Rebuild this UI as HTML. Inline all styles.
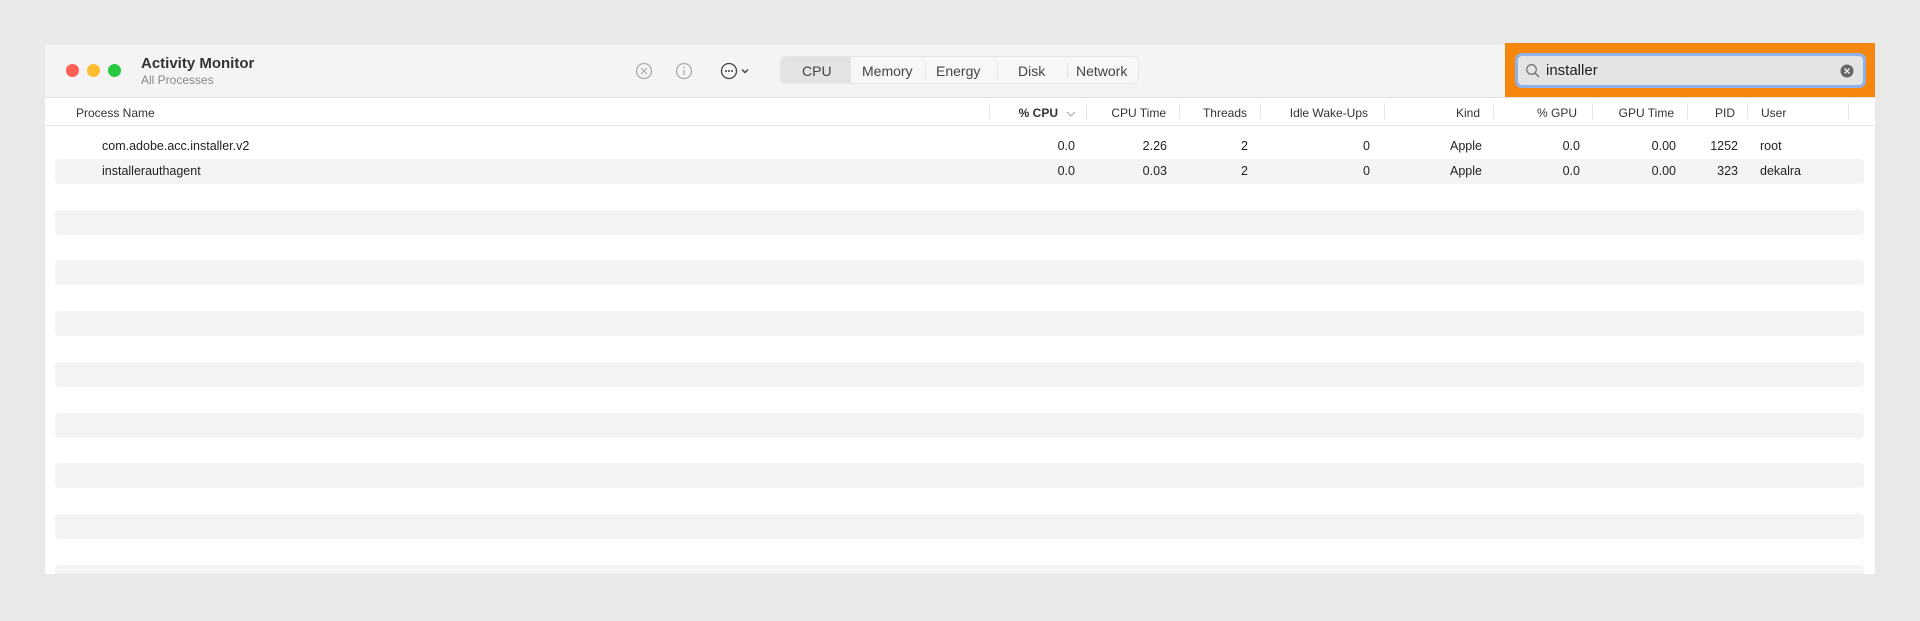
<!DOCTYPE html>
<html><head><meta charset="utf-8"><style>
*{margin:0;padding:0;box-sizing:border-box}
body{width:1920px;height:621px;background:#e9e9e9;font-family:"Liberation Sans",sans-serif;position:relative;overflow:hidden;color:#222}
.win{position:absolute;left:45px;top:45px;width:1830px;height:529px;background:#fff;overflow:hidden}
.tb{position:absolute;left:0;top:0;width:100%;height:53px;background:#f4f4f4;border-bottom:1px solid #e0e0e0}
.a{position:absolute;white-space:nowrap}
.dot{position:absolute;width:13px;height:13px;border-radius:50%;top:19px}
.seg{position:absolute;left:735px;top:11px;width:359px;height:28px;border:1px solid #e6e6e6;border-radius:6px;background:#f7f7f7}
.seg span{position:absolute;top:6px;font-size:14px;color:#444}
.hd{position:absolute;top:61px;font-size:12px;color:#333}
.r{text-align:right}
.sep{position:absolute;top:58px;width:1px;height:16px;background:#e4e4e4}
.cell{position:absolute;font-size:12.5px;color:#222}
.stripe{position:absolute;left:10px;width:1809px;height:25px;background:#f4f4f4;border-radius:4px}
</style></head><body>
<div class="win">
<div class="tb">
<div class="dot" style="left:21px;background:#fe5f57"></div>
<div class="dot" style="left:42px;background:#febc2e"></div>
<div class="dot" style="left:63px;background:#28c840"></div>
<div class="a" style="left:96px;top:10px;font-size:15px;font-weight:bold;color:#333">Activity Monitor</div>
<div class="a" style="left:96px;top:28px;font-size:12px;color:#888">All Processes</div>
<svg class="a" style="left:590px;top:17px" width="18" height="18"><circle cx="9" cy="9" r="7.5" fill="none" stroke="#aaa" stroke-width="1.2"/><path d="M6 6L12 12M12 6L6 12" stroke="#aaa" stroke-width="1.2"/></svg>
<svg class="a" style="left:630px;top:17px" width="18" height="18"><circle cx="9" cy="9" r="7.5" fill="none" stroke="#aaa" stroke-width="1.2"/><path d="M9 8V13" stroke="#aaa" stroke-width="1.3"/><circle cx="9" cy="5.5" r="0.9" fill="#aaa"/></svg>
<svg class="a" style="left:675px;top:17px" width="32" height="18"><circle cx="9" cy="9" r="7.5" fill="none" stroke="#444" stroke-width="1.3"/><circle cx="6" cy="9" r="1" fill="#444"/><circle cx="9" cy="9" r="1" fill="#444"/><circle cx="12" cy="9" r="1" fill="#444"/><path d="M22 7.5L25 10.5L28 7.5" fill="none" stroke="#444" stroke-width="1.4"/></svg>
<div class="seg">
<div style="position:absolute;left:0;top:0;width:70px;height:26px;background:#e3e3e3;border-radius:5px 0 0 5px"></div>
<span style="left:21px">CPU</span><span style="left:81px">Memory</span><span style="left:155px">Energy</span><span style="left:237px">Disk</span><span style="left:295px">Network</span>
<div style="position:absolute;left:144px;top:5px;width:1px;height:16px;background:#e4e4e4"></div>
<div style="position:absolute;left:216px;top:5px;width:1px;height:16px;background:#e4e4e4"></div>
<div style="position:absolute;left:286px;top:5px;width:1px;height:16px;background:#e4e4e4"></div>
</div>
</div>
<div style="position:absolute;left:0;top:80px;width:100%;height:1px;background:#e4e4e4"></div>
<div class="hd" style="left:31px">Process Name</div>
<div class="sep" style="left:944px"></div><div class="sep" style="left:1041px"></div><div class="sep" style="left:1134px"></div><div class="sep" style="left:1215px"></div><div class="sep" style="left:1339px"></div><div class="sep" style="left:1448px"></div><div class="sep" style="left:1547px"></div><div class="sep" style="left:1642px"></div><div class="sep" style="left:1702px"></div><div class="sep" style="left:1803px"></div>
<div class="hd r" style="right:817px;font-weight:bold">% CPU</div>
<svg class="a" style="left:1021px;top:65px" width="10" height="8"><path d="M1 2L5 6L9 2" fill="none" stroke="#aaa" stroke-width="1.1"/></svg>
<div class="hd r" style="right:709px">CPU Time</div>
<div class="hd r" style="right:628px">Threads</div>
<div class="hd r" style="right:507px">Idle Wake-Ups</div>
<div class="hd r" style="right:395px">Kind</div>
<div class="hd r" style="right:298px">% GPU</div>
<div class="hd r" style="right:201px">GPU Time</div>
<div class="hd r" style="right:140px">PID</div>
<div class="hd" style="left:1716px">User</div>
<div class="stripe" style="top:114px"></div>
<div class="stripe" style="top:165px"></div><div class="stripe" style="top:215px"></div><div class="stripe" style="top:266px"></div><div class="stripe" style="top:317px"></div><div class="stripe" style="top:368px"></div><div class="stripe" style="top:418px"></div><div class="stripe" style="top:469px"></div><div class="stripe" style="top:520px"></div>
<div class="cell" style="left:57px;top:94px">com.adobe.acc.installer.v2</div>
<div class="cell r" style="right:800px;top:94px">0.0</div><div class="cell r" style="right:708px;top:94px">2.26</div><div class="cell r" style="right:627px;top:94px">2</div><div class="cell r" style="right:505px;top:94px">0</div><div class="cell r" style="right:393px;top:94px">Apple</div><div class="cell r" style="right:295px;top:94px">0.0</div><div class="cell r" style="right:199px;top:94px">0.00</div><div class="cell r" style="right:137px;top:94px">1252</div><div class="cell" style="left:1715px;top:94px">root</div>
<div class="cell" style="left:57px;top:119px">installerauthagent</div>
<div class="cell r" style="right:800px;top:119px">0.0</div><div class="cell r" style="right:708px;top:119px">0.03</div><div class="cell r" style="right:627px;top:119px">2</div><div class="cell r" style="right:505px;top:119px">0</div><div class="cell r" style="right:393px;top:119px">Apple</div><div class="cell r" style="right:295px;top:119px">0.0</div><div class="cell r" style="right:199px;top:119px">0.00</div><div class="cell r" style="right:137px;top:119px">323</div><div class="cell" style="left:1715px;top:119px">dekalra</div>
</div>
<div class="a" style="left:1505px;top:43px;width:370px;height:54px;background:#f5870f"></div>
<div class="a" style="left:1515px;top:53px;width:351px;height:35px;background:#e4e4e4;border:3px solid #8fb2ea;border-radius:7px"></div>
<svg class="a" style="left:1525px;top:63px" width="16" height="16"><circle cx="6.5" cy="6.5" r="4.8" fill="none" stroke="#777" stroke-width="1.3"/><path d="M10 10L14 14" stroke="#777" stroke-width="1.5"/></svg>
<div class="a" style="left:1546px;top:62px;font-size:15px;color:#222">installer</div>
<svg class="a" style="left:1840px;top:64px" width="14" height="14"><circle cx="7" cy="7" r="6.5" fill="#666"/><path d="M4.5 4.5L9.5 9.5M9.5 4.5L4.5 9.5" stroke="#eee" stroke-width="1.4"/></svg>
</body></html>
